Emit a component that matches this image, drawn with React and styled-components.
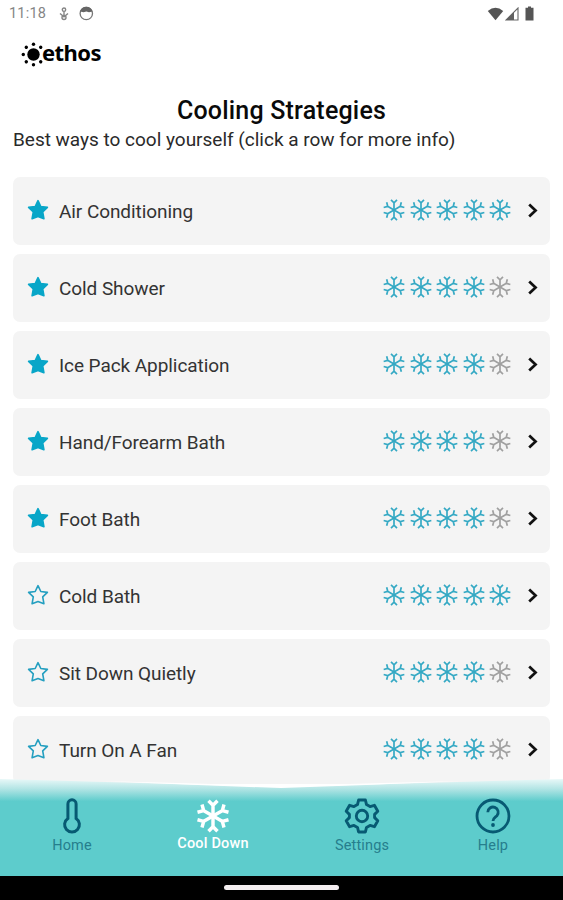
import React from 'react'
import styled, { createGlobalStyle } from 'styled-components'

const GlobalStyle = createGlobalStyle`
  * {
    box-sizing: border-box;
  }

  body {
    margin: 0;
    background-color: #ffffff;
    font-family: Roboto, "Liberation Sans", sans-serif;
  }
`

const Screen = styled.div`
  width: 563px;
  height: 900px;
  display: flex;
  flex-direction: column;
  overflow: hidden;
  background-color: #ffffff;
`

const StatusBar = styled.div`
  flex: none;
  height: 28px;
  padding: 0 25px 0 9px;
  display: flex;
  align-items: center;
  justify-content: space-between;
`

const StatusGroup = styled.div`
  display: flex;
  align-items: center;
  gap: ${props => props.$gap}px;
`

const Clock = styled.span`
  width: 38px;
  margin-right: 3px;
  font-size: 14.5px;
  line-height: 28px;
  letter-spacing: 0.2px;
  color: #858585;
  white-space: nowrap;
`

const Logo = styled.div`
  flex: none;
  height: 54px;
  padding: 0 0 2px 21px;
  display: flex;
  align-items: center;
`

const LogoText = styled.span`
  font-family: "Noto Sans", "Open Sans", sans-serif;
  font-size: 22px;
  font-weight: 700;
  line-height: 28px;
  letter-spacing: -0.55px;
  margin: -4px 0 0 -4px;
  color: #000000;
`

const Heading = styled.div`
  flex: none;
  height: 94.6px;
  padding: 14px 13px 0;
`

const Title = styled.h1`
  margin: 0;
  font-size: 25px;
  font-weight: 500;
  line-height: 29px;
  letter-spacing: 0.2px;
  text-align: center;
  color: #0a0a0a;
`

const Subtitle = styled.p`
  margin: 0;
  font-size: 19px;
  line-height: 30px;
  letter-spacing: -0.01px;
  color: #2a2a2a;
  white-space: nowrap;
`

const List = styled.div`
  flex: 1;
  min-height: 0;
  padding: 0 13px;
  display: flex;
  flex-direction: column;
  gap: 9px;
  overflow: hidden;
`

const Row = styled.div`
  flex: none;
  height: 68px;
  padding: 0 10px 1px 14px;
  display: flex;
  align-items: center;
  border-radius: 7px;
  background-color: #f4f4f4;
`

const RowName = styled.span`
  flex: 1;
  margin-left: 10px;
  padding-top: 2px;
  font-size: 19px;
  letter-spacing: -0.07px;
  color: #333333;
`

const Rating = styled.div`
  display: flex;
  gap: 2.4px;
  margin-right: 14px;
`

const TabBar = styled.div`
  position: relative;
  flex: none;
  height: 97px;
  margin-top: -9px;
  padding: 0 4px 0 15px;
  display: flex;
`

const TabBackdrop = styled.svg`
  position: absolute;
  top: 0;
  left: 0;
`

const Tab = styled.div`
  position: relative;
  flex: ${props => props.$grow} 1 0;
  padding-top: 19px;
  display: flex;
  flex-direction: column;
  align-items: center;
  color: ${props => (props.$active ? '#ffffff' : '#075a73')};
`

const TabLabel = styled.span`
  margin-top: ${props => (props.$active ? 1 : 3)}px;
  font-size: 14.5px;
  line-height: 18px;
  font-weight: ${props => (props.$active ? 500 : 400)};
  letter-spacing: ${props => (props.$active ? 0.2 : 0.15)}px;
  color: ${props => (props.$active ? '#ffffff' : '#267e8d')};
  white-space: nowrap;
`

const GestureBar = styled.div`
  flex: none;
  height: 24px;
  padding-bottom: 1px;
  display: flex;
  align-items: center;
  justify-content: center;
  background-color: #000000;
`

const GestureHandle = styled.div`
  width: 115px;
  height: 5px;
  border-radius: 3px;
  background-color: #f4eef0;
`

const strategies = [
  { name: 'Air Conditioning', rating: 5, favorite: true },
  { name: 'Cold Shower', rating: 4, favorite: true },
  { name: 'Ice Pack Application', rating: 4, favorite: true },
  { name: 'Hand/Forearm Bath', rating: 4, favorite: true },
  { name: 'Foot Bath', rating: 4, favorite: true },
  { name: 'Cold Bath', rating: 5, favorite: false },
  { name: 'Sit Down Quietly', rating: 4, favorite: false },
  { name: 'Turn On A Fan', rating: 4, favorite: false },
]

function Snowflake({ size, color, weight }) {
  return (
    <svg width={size} height={size} viewBox="0 0 24 24" fill="none" stroke={color} strokeWidth={weight}>
      {[0, 60, 120, 180, 240, 300].map(angle => (
        <path key={angle} d="M12 12V4.6M9 1.8L12 4.8L15 1.8" transform={`rotate(${angle} 12 12)`} />
      ))}
    </svg>
  )
}

function Star({ filled }) {
  return (
    <svg width="22" height="22" viewBox="0 0 22 22">
      <path
        d="M11 1.6L13.8 7.5L20.4 8.4L15.7 12.9L16.9 19.7L11 17.6L5.1 19.7L6.3 12.9L1.6 8.4L8.2 7.5Z"
        fill={filled ? '#08a6c8' : 'none'}
        stroke={filled ? '#08a6c8' : '#249fc0'}
        strokeWidth="1.6"
        strokeLinejoin="round"
      />
    </svg>
  )
}

function Chevron() {
  return (
    <svg width="14" height="16" viewBox="0 0 14 16">
      <path d="M3.2 2.4L9.6 8.5L3.2 14.6" fill="none" stroke="#111111" strokeWidth="2.7" />
    </svg>
  )
}

function Sun() {
  return (
    <svg width="25" height="25" viewBox="0 0 25 25">
      <circle cx="12.5" cy="12.5" r="6.2" />
      {[0, 45, 90, 135, 225, 270, 315].map(angle => (
        <circle key={angle} cx="2.3" cy="12.5" r="1.7" transform={`rotate(${angle} 12.5 12.5)`} />
      ))}
    </svg>
  )
}

function Thermometer() {
  return (
    <svg width="36" height="36" viewBox="0 0 36 36" fill="none" stroke="currentColor" strokeWidth="3">
      <path d="M13.9 20.4V5.9a4.1 4.1 0 0 1 8.2 0V20.4a7.4 7.4 0 1 1-8.2 0Z" />
    </svg>
  )
}

function Gear() {
  return (
    <svg width="36" height="36" viewBox="0 0 36 36" fill="none" stroke="currentColor" strokeWidth="2.9" strokeLinejoin="round">
      <path d="M14.6 2h6.8l1.1 4.6 3.5 2 4.4-1.3 3.4 5.9-3.2 3.2v3.2l3.2 3.2-3.4 5.9-4.4-1.3-3.5 2-1.1 4.6h-6.8l-1.1-4.6-3.5-2-4.4 1.3-3.4-5.9 3.2-3.2v-3.2l-3.2-3.2 3.4-5.9 4.4 1.3 3.5-2Z" />
      <circle cx="18" cy="18" r="5.7" />
    </svg>
  )
}

function Question() {
  return (
    <svg width="36" height="36" viewBox="0 0 36 36" fill="none" stroke="currentColor" strokeWidth="2.8">
      <circle cx="18" cy="18" r="16" />
      <path d="M12.8 14.3a5.2 5.2 0 1 1 9.1 3.4c-1.8 1.8-3.9 2.7-3.9 5.3" />
      <circle cx="18" cy="27" r="1.9" fill="currentColor" stroke="none" />
    </svg>
  )
}

function StatusIcons() {
  return (
    <StatusGroup $gap={1}>
      <svg width="17" height="14" viewBox="0 0 17 14">
        <path d="M.8 4Q8.5-2.3 16.2 4L8.5 13.2Z" fill="#555555" />
      </svg>
      <svg width="15" height="14" viewBox="0 0 15 14">
        <path d="M13 1V13H1Z" fill="none" stroke="#666666" strokeWidth="1.1" />
        <path d="M9 5V13H1Z" fill="#606060" />
      </svg>
      <svg width="17" height="16" viewBox="0 0 17 16">
        <path d="M7 .5h3v1.3h2.5V14.5H4.5V1.8H7Z" fill="#555555" />
      </svg>
    </StatusGroup>
  )
}

function Notifications() {
  return (
    <StatusGroup $gap={8}>
      <Clock>11:18</Clock>
      <svg width="12" height="14" viewBox="0 0 12 14" fill="none" stroke="#858585" strokeWidth="1.4">
        <circle cx="6" cy="2.7" r="1.7" />
        <path d="M6 4.4V9M2 6.5L6 9.8L10 6.5" />
        <circle cx="6" cy="10.5" r="2" />
      </svg>
      <svg width="16" height="16" viewBox="0 0 16 16">
        <circle cx="8.3" cy="7.5" r="6.2" fill="none" stroke="#777777" strokeWidth="1.3" />
        <path d="M2 5.5Q3.5 .8 8.3 .8T14.6 5.5L11 6.3L8.3 5.5L5.6 6.3Z" fill="#666666" />
      </svg>
    </StatusGroup>
  )
}

function App() {
  return (
    <>
      <GlobalStyle />
      <Screen>
        <StatusBar>
          <Notifications />
          <StatusIcons />
        </StatusBar>
        <Logo>
          <Sun />
          <LogoText>ethos</LogoText>
        </Logo>
        <Heading>
          <Title>Cooling Strategies</Title>
          <Subtitle>Best ways to cool yourself (click a row for more info)</Subtitle>
        </Heading>
        <List>
          {strategies.map(item => (
            <Row key={item.name}>
              <Star filled={item.favorite} />
              <RowName>{item.name}</RowName>
              <Rating>
                {[1, 2, 3, 4, 5].map(n => (
                  <Snowflake key={n} size={24} color={n <= item.rating ? '#35a9c4' : '#a0a0a0'} weight={1.7} />
                ))}
              </Rating>
              <Chevron />
            </Row>
          ))}
        </List>
        <TabBar>
          <TabBackdrop width="563" height="97" viewBox="0 0 563 97">
            <defs>
              <linearGradient id="fade" x1="0" y1="0" x2="0" y2="97" gradientUnits="userSpaceOnUse">
                <stop offset="0" stopColor="#e8f8f8" />
                <stop offset="0.1" stopColor="#b4e5e5" />
                <stop offset="0.23" stopColor="#5dcccc" />
              </linearGradient>
            </defs>
            <path d="M0 0Q140 4 281 8Q422 4 563 0V97H0Z" fill="url(#fade)" />
            <path d="M100 2Q190 4 281 7Q372 4 463 2Q372 6 281 9Q190 6 100 2Z" fill="#ffffff" />
          </TabBackdrop>
          <Tab $grow={114}>
            <Thermometer />
            <TabLabel>Home</TabLabel>
          </Tab>
          <Tab $grow={168} $active>
            <Snowflake size={36} color="currentColor" weight={2.3} />
            <TabLabel $active>Cool Down</TabLabel>
          </Tab>
          <Tab $grow={130}>
            <Gear />
            <TabLabel>Settings</TabLabel>
          </Tab>
          <Tab $grow={132}>
            <Question />
            <TabLabel>Help</TabLabel>
          </Tab>
        </TabBar>
        <GestureBar>
          <GestureHandle />
        </GestureBar>
      </Screen>
    </>
  )
}

export default App
